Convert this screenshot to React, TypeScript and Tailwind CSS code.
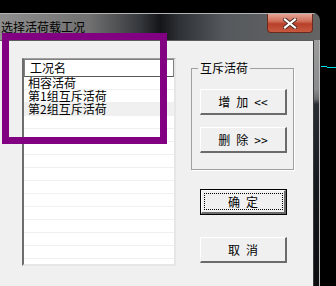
import React from "react";

const rows = ["相容活荷", "第1组互斥活荷", "第2组互斥活荷"];

function Btn({ parts, focused, className = "" }: { parts: string[]; focused?: boolean; className?: string }) {
  const face = (
    <div className="flex h-full w-full items-center justify-center gap-[6px] border-t border-l border-t-white border-l-white border-b-2 border-r-2 border-b-[#6b6b6b] border-r-[#6b6b6b] bg-[#f0f0f0] text-[12px] leading-none text-black">
      {parts.map((p, i) => (
        <span key={i}>{p}</span>
      ))}
    </div>
  );
  if (!focused) return <div className={`h-[26px] w-[87px] ${className}`}>{face}</div>;
  return (
    <div className={`relative h-[26px] w-[87px] border border-black ${className}`}>
      {face}
      <div className="absolute inset-x-[3px] top-[3px] bottom-[4px] border border-dotted border-black" />
    </div>
  );
}

export default function App() {
  return (
    <div className="relative h-[286px] w-[336px] overflow-hidden bg-black font-['Noto_Sans_CJK_SC',sans-serif]">
      <div className="mt-[13px] w-[320px] overflow-hidden rounded-tr-[7px]">
        {/* title bar */}
        <div className="flex h-[27px] border-t border-t-[#b4b4b4] bg-[linear-gradient(90deg,#8e8e8e_0%,#707070_28%,#34373b_44%,#131518_50%,#2e3135_56%,#55595d_70%,#646464_100%)]">
          <div className="self-center pl-[1px] text-[12px] leading-none text-black">选择活荷载工况</div>
          <div className="flex-1" />
          <div className="mr-[7px] flex h-[19px] w-[46px] items-center justify-center rounded-b-[4px] border border-t-0 border-[#6a2a1e] bg-[linear-gradient(180deg,#e6a392_0%,#d0705a_40%,#b8402a_55%,#c85a40_100%)]">
            <svg width="14" height="11" viewBox="0 0 14 11">
              <path d="M2 1.5 L12 9.5 M12 1.5 L2 9.5" stroke="#4a2a24" strokeWidth="4" strokeLinecap="square" />
              <path d="M2 1.5 L12 9.5 M12 1.5 L2 9.5" stroke="#ffffff" strokeWidth="2.2" strokeLinecap="square" />
            </svg>
          </div>
        </div>
        {/* body */}
        <div className="flex h-[246px]">
          <div className="flex w-[314px] border-t border-r border-t-[#5c5c5c] border-r-[#3c3c3c] bg-[#f0f0f0] pl-[22px] pt-[17px]">
            {/* list view */}
            <div className="flex h-[208px] w-[154px] flex-col overflow-hidden border-l-2 border-t border-r-2 border-b-2 border-l-[#6d6d6d] border-t-[#a0a0a0] border-r-[#e6e6e6] border-b-[#e6e6e6] bg-white">
              <div className="flex h-[18px] shrink-0 items-center border border-[#808080] border-b-[#5a5a5a] pl-[5px] text-[12px] leading-none text-black shadow-[inset_1px_1px_0_#ffffff]">
                工况名
              </div>
              {Array.from({ length: 15 }).map((_, i) => (
                <div
                  key={i}
                  className={`h-[13px] shrink-0 border-b border-b-[#f0f0f0] pl-[4px] text-[12px] leading-[12px] text-black ${i === 2 ? "bg-[#f0f0f0]" : ""}`}
                >
                  {rows[i] ?? ""}
                </div>
              ))}
            </div>
            {/* right column */}
            <div className="ml-[15px] flex flex-col">
              <div className="relative mt-[10px] h-[102px] w-[103px] border border-[#a0a0a0] pl-[8px] pt-[20px] shadow-[1px_1px_0_#ffffff]">
                <div className="absolute left-[6px] top-[-8px] bg-[#f0f0f0] px-[2px] text-[12px] leading-[14px] text-black">互斥活荷</div>
                <Btn parts={["增", "加", "<<"]} className="h-[25px]" />
                <Btn parts={["删", "除", ">>"]} className="mt-[12px]" />
              </div>
              <Btn parts={["确", "定"]} focused className="ml-[9px] mt-[19px]" />
              <Btn parts={["取", "消"]} className="ml-[9px] mt-[22px]" />
            </div>
          </div>
          <div className="w-[6px] bg-[linear-gradient(180deg,#9c9c9c_0%,#8a8c8e_20%,#6a6c6e_24%,#2a2e33_26%,#15181c_60%,#0c0e10_100%)]" />
        </div>
      </div>
      <div className="absolute left-[319px] top-[40px] h-[246px] w-[1px] bg-[#bdbdbd]" />
      <div className="absolute left-[321px] top-[66px] h-[1px] w-[6px] bg-[#00e0e8]" />
      <div className="absolute left-[327px] top-[67px] h-[1px] w-[9px] bg-[#00e0e8]" />
      {/* annotation */}
      <div className="absolute left-[2px] top-[33px] h-[111px] w-[165px] border-[7px] border-[#820082]" />
    </div>
  );
}
